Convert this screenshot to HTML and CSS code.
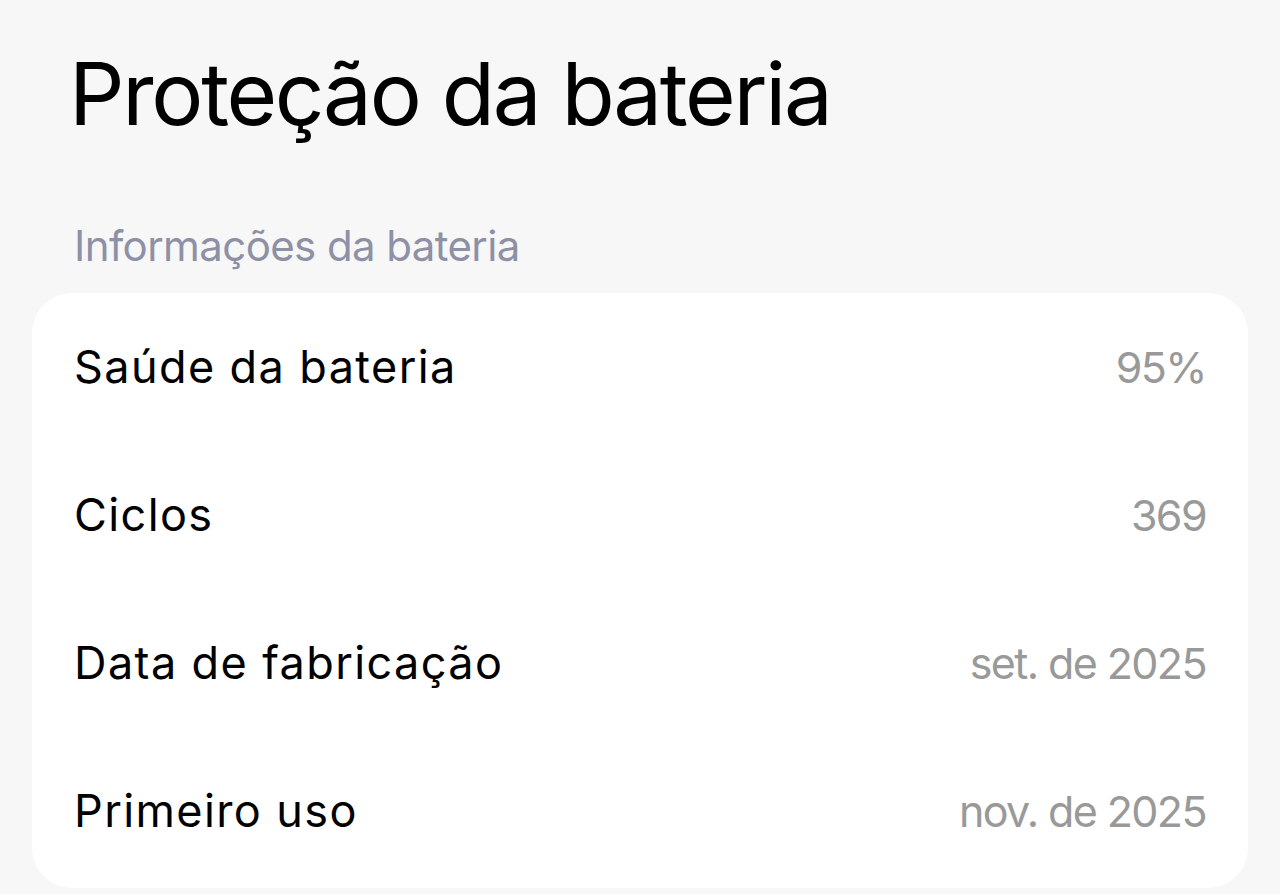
FILE: index.html
```html
<!DOCTYPE html>
<html lang="pt-BR">
<head>
<meta charset="utf-8">
<title>Proteção da bateria</title>
<link rel="stylesheet" href="styles.css">
</head>
<body>
<main class="page">
  <h1 class="title">Proteção da bateria</h1>
  <h2 class="section-label">Informações da bateria</h2>
  <section class="card">
    <div class="row"><span class="row-label">Saúde da bateria</span><span class="row-value">95%</span></div>
    <div class="row"><span class="row-label">Ciclos</span><span class="row-value">369</span></div>
    <div class="row"><span class="row-label">Data de fabricação</span><span class="row-value">set. de 2025</span></div>
    <div class="row"><span class="row-label">Primeiro uso</span><span class="row-value">nov. de 2025</span></div>
  </section>
</main>
</body>
</html>
```
FILE: styles.css
```css
html, body {
  margin: 0;
  padding: 0;
  background: #f7f7f7;
}
body {
  font-family: Inter, "Noto Sans", sans-serif;
  color: #000;
}
.page {
  padding: 44px 32px 0 32px;
  display: flex;
  flex-direction: column;
}
.title {
  margin: 0 0 0 37px;
  font-size: 87px;
  font-weight: 400;
  line-height: 100px;
  letter-spacing: -2.3px;
}
.section-label {
  margin: 77px 0 0 42px;
  font-size: 42px;
  font-weight: 400;
  line-height: 50px;
  letter-spacing: -0.6px;
  color: #8e91a6;
}
.card {
  margin-top: 22px;
  background: #fff;
  border-radius: 40px;
  padding-bottom: 3px;
}
.row {
  height: 148px;
  display: flex;
  align-items: center;
  justify-content: space-between;
  padding: 0 42px 0 42px;
  font-size: 45px;
  line-height: 148px;
}
.row-label {
  color: #000;
  letter-spacing: 1.4px;
}
.row-value {
  color: #999;
  font-size: 43px;
  letter-spacing: -1.6px;
}
```
